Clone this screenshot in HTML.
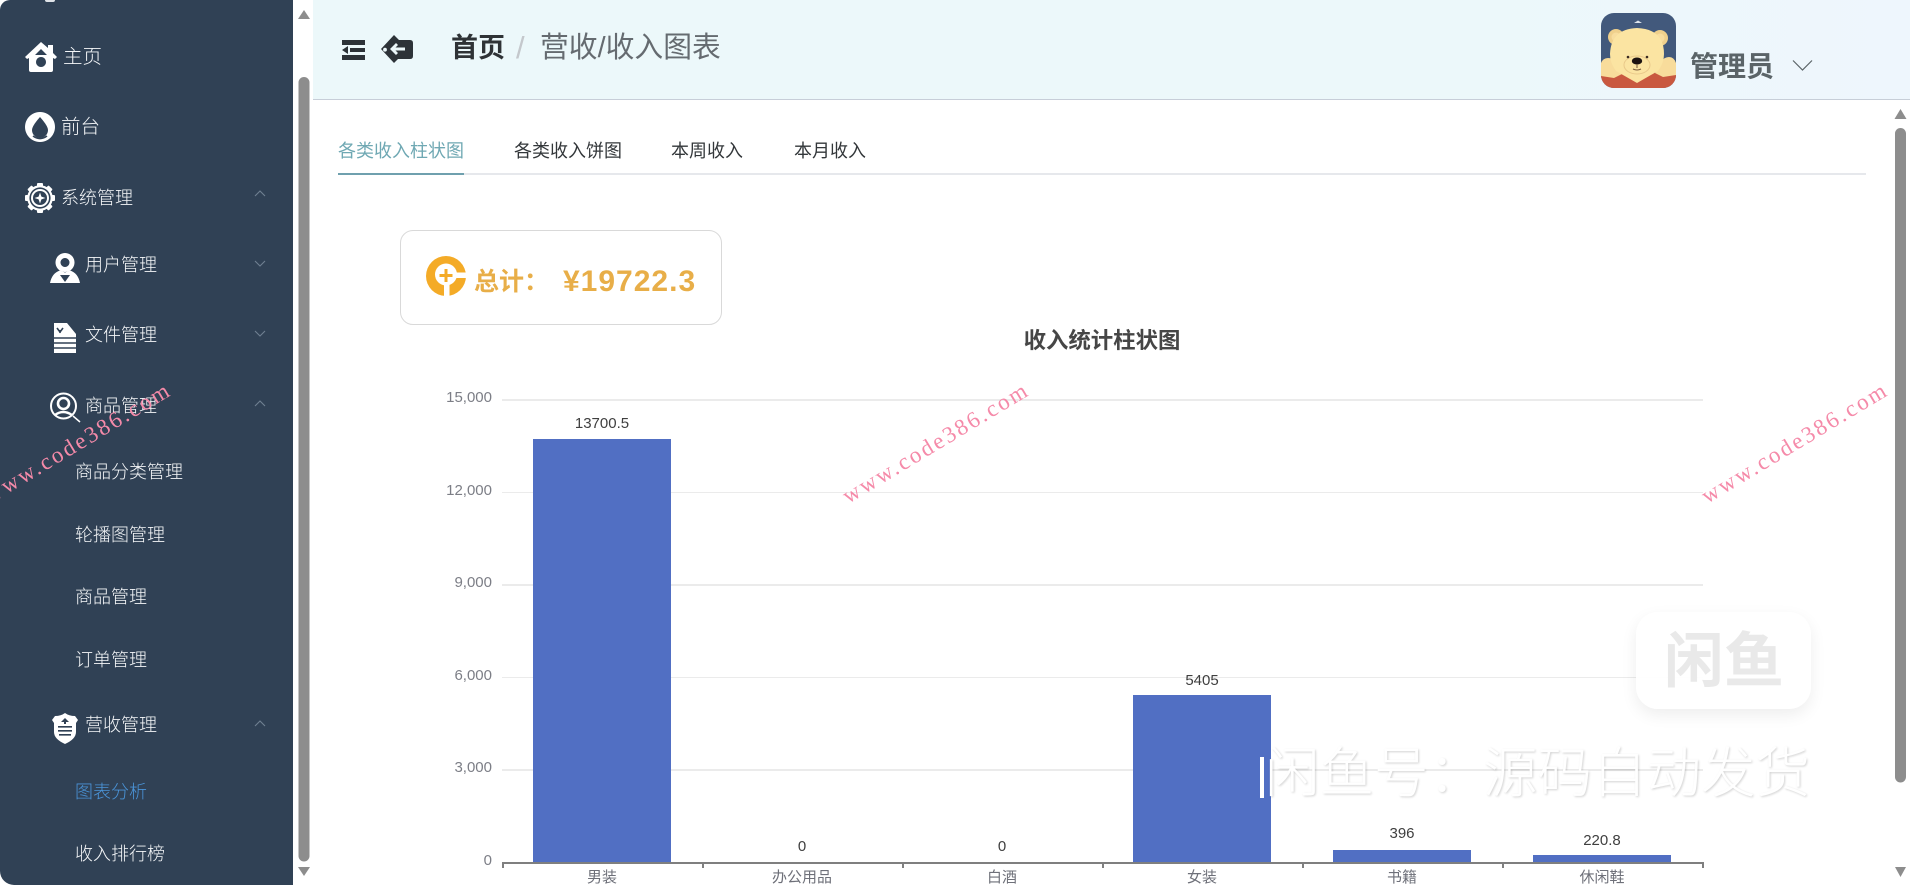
<!DOCTYPE html>
<html lang="zh-CN">
<head>
<meta charset="utf-8">
<title>营收/收入图表</title>
<style>
html,body{margin:0;padding:0;width:1910px;height:885px;overflow:hidden;background:#fff}
body{position:relative;font-family:"Liberation Sans","Noto Sans CJK SC",sans-serif}
.a{position:absolute;white-space:nowrap}
.side{left:0;top:0;width:293px;height:885px;background:#304155;border-radius:10px 0 0 14px}
.m{position:absolute;white-space:nowrap;color:#f4f6f8;font-size:18px;line-height:24px;height:24px;font-weight:300}
.ar{position:absolute;left:0;top:0}
.hdr{left:313px;top:0;width:1597px;height:99px;background:linear-gradient(90deg,#ecf8fa 0%,#ecf8fa 70%,#eef6fd 100%);border-bottom:1.5px solid #c7ced8}
.g{position:absolute;left:502px;width:1201px;height:1.5px;background:#ebebeb}
.yl{position:absolute;width:80px;left:412px;text-align:right;font-size:15px;line-height:18px;color:#7c7e86}
.b{position:absolute;width:138px;background:#516fc3}
.v{position:absolute;width:200px;text-align:center;font-size:15px;line-height:18px;color:#3f3f3f}
.xl{position:absolute;width:200px;text-align:center;font-size:15px;line-height:18px;color:#6e7079;top:869px}
.t{position:absolute;width:2px;height:6px;top:862px;background:#7f7f7f}
.wm{position:absolute;font-family:"Liberation Serif",serif;font-size:23px;letter-spacing:2.4px;color:#f58aa9;line-height:24px;width:240px;text-align:center;transform:rotate(-31deg);white-space:nowrap}
</style>
</head>
<body>

<!-- sidebar -->
<div class="a side"></div>
<div class="a" style="left:45px;top:0;width:10px;height:2px;background:#dfe3e8;border-radius:0 0 5px 5px"></div>
<div class="m" style="left:63px;top:45px;font-size:19.500px">主页</div>
<div class="m" style="left:61px;top:115px;font-size:19.500px">前台</div>
<div class="m" style="left:61px;top:186px">系统管理</div>
<div class="m" style="left:85px;top:253px">用户管理</div>
<div class="m" style="left:85px;top:323px">文件管理</div>
<div class="m" style="left:85px;top:394px">商品管理</div>
<div class="m" style="left:75px;top:460px">商品分类管理</div>
<div class="m" style="left:75px;top:523px">轮播图管理</div>
<div class="m" style="left:75px;top:585px">商品管理</div>
<div class="m" style="left:75px;top:648px">订单管理</div>
<div class="m" style="left:85px;top:713px">营收管理</div>
<div class="m" style="left:75px;top:780px;color:#4a94d8">图表分析</div>
<div class="m" style="left:75px;top:842px">收入排行榜</div>

<svg class="ar" width="293" height="885" viewBox="0 0 293 885">
  <!-- chevrons -->
  <g fill="none" stroke="#6f8092" stroke-width="1.1">
    <path d="M255 196l5-5 5 5"/>
    <path d="M255 261l5 5 5-5"/>
    <path d="M255 331l5 5 5-5"/>
    <path d="M255 406l5-5 5 5"/>
    <path d="M255 726l5-5 5 5"/>
  </g>
  <!-- house -->
  <path fill="#fff" fill-rule="evenodd" d="M41 42l7 6v-3h5v8l4 4-2 2-2-1v12q0 2-2 2H31q-2 0-2-2V58l-2 1-2-2zM41 49l-6 6h12zM41 57a5 5 0 1 0 .01 0z"/>
  <!-- drop -->
  <path fill="#fff" fill-rule="evenodd" d="M40 112a15 15 0 1 0 .01 0zM40 117q8 9 8 13a8 8 0 0 1-16 0q0-4 8-13z"/>
  <path fill="none" stroke="#304155" stroke-width="1.600" d="M33 136q7 5 14 0"/>
  <!-- gear -->
  <g fill="#fff">
    <circle cx="40" cy="198" r="12.800"/>
    <g>
      <rect x="37" y="183" width="6" height="30" rx="1"/>
      <rect x="37" y="183" width="6" height="30" rx="1" transform="rotate(45 40 198)"/>
      <rect x="37" y="183" width="6" height="30" rx="1" transform="rotate(90 40 198)"/>
      <rect x="37" y="183" width="6" height="30" rx="1" transform="rotate(135 40 198)"/>
    </g>
    <circle cx="40" cy="198" r="10.600" fill="#304155"/>
    <circle cx="40" cy="198" r="9"/>
    <circle cx="40" cy="198" r="7" fill="#304155"/>
    <path d="M40 192.500l1.400 4.100 4.100 1.400-4.100 1.400-1.400 4.100-1.400-4.100-4.100-1.400 4.100-1.400z"/>
  </g>
  <!-- user -->
  <g fill="#fff">
    <path fill-rule="evenodd" d="M65 253a9.500 9.500 0 1 0 .01 0zM65 258a4.500 4.500 0 1 1-.01 0z"/>
    <path d="M50 283q2-10 10-12.500l5 2 5-2q8 2.500 10 12.500z"/>
    <path fill="#304155" d="M60 275h10l-5 7z"/>
  </g>
  <!-- file -->
  <path fill="#fff" d="M54 323h13l9 11v19H54z"/>
  <g stroke="#304155" stroke-width="1.600" fill="none">
    <path d="M54 338h22M54 343h22M54 348h22"/>
    <path d="M57 328l3 4 3-4M60 333v-3"/>
  </g>
  <!-- search user -->
  <g fill="none" stroke="#fff">
    <circle cx="63.500" cy="406" r="12.500" stroke-width="2"/>
    <circle cx="63.500" cy="403.500" r="5.500" stroke-width="2.600"/>
    <path d="M55 415q8-6 17 0" stroke-width="2.400"/>
    <path d="M73 416l7 6" stroke-width="1.500"/>
  </g>
  <!-- shield -->
  <path fill="#fff" d="M65 713q4 3 10 3l3 4-2 3v9q0 7-11 12-11-5-11-12v-9l-2-3 3-4q6 0 10-3z"/>
  <path fill="#304155" d="M65 718l4 4h-3v2h-2v-2h-3zM58 726h14v1.600H58zM58 730h14v1.600H58zM59 734h12v1.600H59z"/>
</svg>

<!-- left scrollbar -->
<svg class="a" style="left:293px;top:0" width="20" height="885" viewBox="0 0 20 885">
  <path fill="#8d8d8d" d="M11 10l6 9H5z"/>
  <path fill="#8d8d8d" d="M5 77.500a5.500 5.500 0 0 1 11 0V851a5.500 5.500 0 0 1-11 0z" transform="translate(0.500 5)"/>
  <path fill="#8d8d8d" d="M5 867h12l-6 9z"/>
</svg>

<!-- header -->
<div class="a hdr"></div>
<svg class="a" style="left:335px;top:25px" width="90" height="50" viewBox="0 0 90 50">
  <path fill="#2d3338" d="M7 15h23v5H7zM15 23h15v4H15zM7 30h23v5H7zM7 25l6-4v8z"/>
  <path fill="#2d3338" fill-rule="evenodd" d="M46 24L59 10l5 5h11q3 0 3 3v13q0 3-3 3H63l-4 4z"/>
  <path fill="#ecf8fa" d="M50 22.800a1.900 1.900 0 1 1 0 3.800 1.900 1.900 0 0 1 0-3.800zM55 24l6-6 2 2-2.500 2.500H70v3h-9.500L63 28l-2 2z"/>
</svg>
<div class="a" style="left:451px;top:30px;font-size:27px;line-height:36px;font-weight:700;color:#2f3336">首页</div>
<div class="a" style="left:516px;top:30px;font-size:31px;line-height:36px;font-weight:400;color:#c4c8cc">/</div>
<div class="a" style="left:540px;top:30px;font-size:28.800px;line-height:36px;color:#656b70">营收/收入图表</div>

<!-- avatar -->
<svg class="a" style="left:1601px;top:13px" width="75" height="75" viewBox="0 0 75 75">
  <defs><clipPath id="c"><rect width="75" height="75" rx="13"/></clipPath></defs>
  <g clip-path="url(#c)">
    <rect width="75" height="75" fill="#42597c"/>
    <path d="M33 10l4-2.500 4 2.500z" fill="#dfe6ee"/>
    <path d="M0 60h75v15H0z" fill="#c9583f"/>
    <circle cx="15" cy="24" r="8" fill="#efd08c"/>
    <circle cx="59" cy="25" r="8" fill="#efd08c"/>
    <circle cx="15" cy="24" r="4.500" fill="#f8dd9e"/>
    <circle cx="59" cy="25" r="4.500" fill="#f8dd9e"/>
    <path d="M0 50q2-5 7-5 5 0 8 4l6 12-8 4-13-2zM75 50q-2-6-7-6-5 0-8 5l-6 11 8 4 13-2z" fill="#f8dc9b"/>
    <path d="M36 70L15 58Q9 50 9 41 10 16 36 15 63 16 63 41 63 50 57 58z" fill="#fbe4a2"/>
    <ellipse cx="36" cy="52" rx="13" ry="9" fill="none" stroke="#e9c98a" stroke-width="1"/>
    <ellipse cx="36" cy="48" rx="5.200" ry="3.500" fill="#1c1210"/>
    <circle cx="27" cy="44" r="1.300" fill="#3a2a20"/>
    <circle cx="46" cy="44" r="1.300" fill="#3a2a20"/>
    <path d="M36 51v4M32 56q4 2 8 0" fill="none" stroke="#7a5a3a" stroke-width="1"/>
  </g>
</svg>
<div class="a" style="left:1690px;top:49px;font-size:28px;line-height:36px;font-weight:700;color:#5b6468">管理员</div>
<svg class="a" style="left:1790px;top:58px" width="24" height="14" viewBox="0 0 24 14"><path d="M3 2.500l9.500 9.500L22 2.500" fill="none" stroke="#5c6468" stroke-width="1.200"/></svg>

<!-- right scrollbar -->
<svg class="a" style="left:1890px;top:100px" width="20" height="785" viewBox="0 0 20 785">
  <path fill="#8d8d8d" d="M10.500 9l6 10H4.500z"/>
  <path fill="#8d8d8d" d="M5 33.500a5.500 5.500 0 0 1 11 0V677a5.500 5.500 0 0 1-11 0z"/>
  <path fill="#8d8d8d" d="M5 767h11l-5.500 10z"/>
</svg>

<!-- tabs -->
<div class="a" style="left:338px;top:139px;font-size:18px;line-height:24px;color:#6fa8b3">各类收入柱状图</div>
<div class="a" style="left:514px;top:139px;font-size:18px;line-height:24px;color:#33373a">各类收入饼图</div>
<div class="a" style="left:671px;top:139px;font-size:18px;line-height:24px;color:#33373a">本周收入</div>
<div class="a" style="left:794px;top:139px;font-size:18px;line-height:24px;color:#33373a">本月收入</div>
<div class="a" style="left:338px;top:173px;width:1528px;height:2px;background:#e6e8ec"></div>
<div class="a" style="left:338px;top:173px;width:126px;height:2px;background:#6fa0ae"></div>

<!-- total card -->
<div class="a" style="left:400px;top:230px;width:320px;height:93px;border:1px solid #d9d9d9;border-radius:13px;box-sizing:content-box"></div>
<svg class="a" style="left:425px;top:255px" width="42" height="42" viewBox="0 0 42 42">
  <circle cx="21" cy="21" r="20" fill="#f4ab27"/>
  <circle cx="21" cy="19.500" r="11" fill="#fff"/>
  <path d="M19.500 14h3v5h5v3h-5v5h-3v-5h-5v-3h5z" fill="#f4ab27"/>
  <path d="M28 17.500h14v5.500H28zM19 29h5.500v13H19z" fill="#fff"/>
</svg>
<div class="a" style="left:474px;top:264px;font-size:25px;line-height:36px;font-weight:700;color:#e8ae48">总计：</div>
<div class="a" style="left:563px;top:264px;font-size:30px;line-height:36px;font-weight:700;color:#e8ae48;letter-spacing:1px">¥19722.3</div>

<!-- chart -->
<div class="a" style="left:902px;top:326px;width:400px;text-align:center;font-size:22.400px;line-height:30px;font-weight:700;color:#464646">收入统计柱状图</div>

<div class="g" style="top:399px"></div>
<div class="g" style="top:491.600px"></div>
<div class="g" style="top:584.200px"></div>
<div class="g" style="top:676.800px"></div>
<div class="g" style="top:769.400px"></div>

<div class="yl" style="top:389px">15,000</div>
<div class="yl" style="top:482px">12,000</div>
<div class="yl" style="top:574px">9,000</div>
<div class="yl" style="top:667px">6,000</div>
<div class="yl" style="top:759px">3,000</div>
<div class="yl" style="top:852px">0</div>

<div class="b" style="left:533px;top:439px;height:423px"></div>
<div class="b" style="left:1133px;top:695px;height:167px"></div>
<div class="b" style="left:1333px;top:850px;height:12px"></div>
<div class="b" style="left:1533px;top:855px;height:7px"></div>

<div class="a" style="left:502px;top:861.500px;width:1201px;height:2px;background:#7f7f7f"></div>
<div class="t" style="left:501.500px"></div>
<div class="t" style="left:701.500px"></div>
<div class="t" style="left:901.500px"></div>
<div class="t" style="left:1101.500px"></div>
<div class="t" style="left:1301.500px"></div>
<div class="t" style="left:1501.500px"></div>
<div class="t" style="left:1701.500px"></div>

<div class="v" style="left:502px;top:415px">13700.5</div>
<div class="v" style="left:702px;top:838px">0</div>
<div class="v" style="left:902px;top:838px">0</div>
<div class="v" style="left:1102px;top:672px">5405</div>
<div class="v" style="left:1302px;top:825px">396</div>
<div class="v" style="left:1502px;top:832px">220.8</div>

<div class="xl" style="left:502px">男装</div>
<div class="xl" style="left:702px">办公用品</div>
<div class="xl" style="left:902px">白酒</div>
<div class="xl" style="left:1102px">女装</div>
<div class="xl" style="left:1302px">书籍</div>
<div class="xl" style="left:1502px">休闲鞋</div>

<!-- xianyu overlay -->
<div class="a" style="left:1636px;top:612px;width:175px;height:97px;background:rgba(255,255,255,.93);border-radius:22px;box-shadow:0 6px 16px rgba(0,0,0,.07)"></div>
<div class="a" style="left:1664px;top:622px;font-size:60px;line-height:80px;font-weight:700;color:#e9e9e9">闲鱼</div>
<div class="a" style="left:1265px;top:741px;font-size:54.500px;line-height:66px;font-weight:300;color:#fff;text-shadow:1px 1px 2px rgba(0,0,0,.18)">闲鱼号：源码自动发货</div>
<div class="a" style="left:1260px;top:757px;width:4px;height:41px;background:#fff"></div>

<!-- pink watermarks -->
<div class="wm" style="left:-42px;top:431px">www.code386.com</div>
<div class="wm" style="left:816px;top:431px">www.code386.com</div>
<div class="wm" style="left:1675px;top:431px">www.code386.com</div>

</body>
</html>
